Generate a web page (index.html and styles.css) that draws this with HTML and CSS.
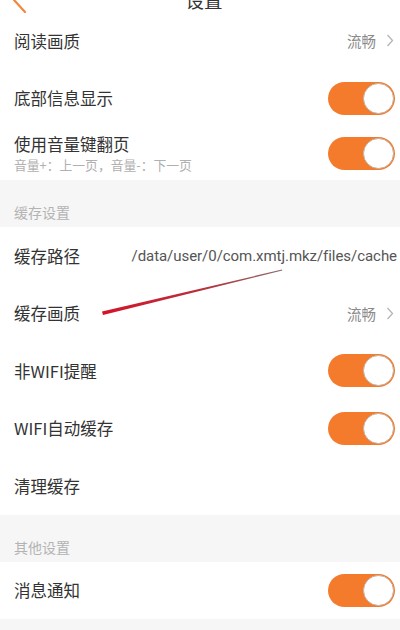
FILE: index.html
```html
<!DOCTYPE html>
<html lang="zh">
<head>
<meta charset="utf-8">
<link rel="stylesheet" href="styles.css">
</head>
<body>
<div class="page">
  <header class="topbar">
    <svg class="back" width="16" height="26" viewBox="0 0 16 26"><path d="M13 1 L2 13 L13 25" fill="none" stroke="#f0883e" stroke-width="2.2" stroke-linecap="round" stroke-linejoin="round"/></svg>
    <div class="title">设置</div>
  </header>

  <div class="row">
    <span class="label">阅读画质</span>
    <span class="value">流畅<svg class="chev" width="8" height="13" viewBox="0 0 8 13"><path d="M1.5 1 L6.5 6.5 L1.5 12" fill="none" stroke="#b5b5b5" stroke-width="1.3"/></svg></span>
  </div>
  <div class="row">
    <span class="label">底部信息显示</span>
    <span class="switch"><span class="knob"></span></span>
  </div>
  <div class="row row-tall">
    <div class="stack">
      <span class="label">使用音量键翻页</span>
      <span class="sub">音量+：上一页，音量-：下一页</span>
    </div>
    <span class="switch"><span class="knob"></span></span>
  </div>

  <div class="section">缓存设置</div>

  <div class="row">
    <span class="label">缓存路径</span>
    <span class="path">/data/user/0/com.xmtj.mkz/files/cache</span>
  </div>
  <div class="row">
    <span class="label">缓存画质</span>
    <span class="value">流畅<svg class="chev" width="8" height="13" viewBox="0 0 8 13"><path d="M1.5 1 L6.5 6.5 L1.5 12" fill="none" stroke="#b5b5b5" stroke-width="1.3"/></svg></span>
  </div>
  <div class="row">
    <span class="label">非WIFI提醒</span>
    <span class="switch"><span class="knob"></span></span>
  </div>
  <div class="row">
    <span class="label">WIFI自动缓存</span>
    <span class="switch"><span class="knob"></span></span>
  </div>
  <div class="row">
    <span class="label">清理缓存</span>
  </div>

  <div class="section">其他设置</div>

  <div class="row">
    <span class="label">消息通知</span>
    <span class="switch"><span class="knob"></span></span>
  </div>
  <div class="footer-gap"></div>

  <svg class="annot" width="400" height="630" viewBox="0 0 400 630">
    <defs>
      <linearGradient id="g" x1="102" y1="313" x2="282" y2="270" gradientUnits="userSpaceOnUse">
        <stop offset="0" stop-color="#d4142a"/>
        <stop offset="0.55" stop-color="#b8303a"/>
        <stop offset="1" stop-color="#8a6a6a"/>
      </linearGradient>
    </defs>
    <polygon points="102,311.5 282,269.6 282.3,270.6 103,315" fill="url(#g)"/>
  </svg>
</div>
</body>
</html>
```

FILE: styles.css
```css
html, body {
  margin: 0;
  padding: 0;
  background: #ffffff;
}
.page {
  position: relative;
  width: 400px;
  height: 630px;
  overflow: hidden;
  font-family: "Noto Sans CJK SC", "Noto Sans", sans-serif;
  color: #333333;
}
.topbar {
  position: relative;
  height: 24px;
  margin-top: -12px;
  display: flex;
  align-items: center;
  justify-content: center;
}
.back {
  position: absolute;
  left: 12px;
  top: -1px;
}
.title {
  font-size: 18.5px;
  line-height: 24px;
  color: #333;
  margin-left: 8px;
}
.row {
  height: 57.5px;
  display: flex;
  align-items: center;
  justify-content: space-between;
  padding: 0 4px 0 14px;
  box-sizing: border-box;
}
.row-tall {
  height: 53px;
  align-items: center;
}
.stack {
  display: flex;
  flex-direction: column;
  margin-top: -2px;
}
.label {
  font-size: 16.5px;
  line-height: 22px;
  color: #333;
}
.sub {
  font-size: 12.8px;
  line-height: 16px;
  color: #b0b0b0;
  margin-top: 2px;
}
.value {
  display: flex;
  align-items: center;
  font-size: 14.5px;
  color: #8a8a8a;
  margin-right: 2px;
}
.chev {
  margin-left: 10px;
}
.path {
  font-family: Roboto, "Noto Sans", sans-serif;
  font-size: 15px;
  color: #555;
  white-space: nowrap;
  margin-right: -1px;
  letter-spacing: -0.05px;
}
.switch {
  position: relative;
  width: 67px;
  height: 33px;
  border-radius: 17px;
  background: #f47a2c;
  box-sizing: border-box;
  margin-right: 1px;
}
.knob {
  position: absolute;
  right: 1px;
  top: 1px;
  width: 31px;
  height: 31px;
  border-radius: 50%;
  background: #ffffff;
  border: 1px solid #c4b2a2;
  box-sizing: border-box;
}
.section {
  height: 47px;
  background: #f6f6f6;
  box-sizing: border-box;
  padding: 22px 0 0 14px;
  font-size: 14px;
  line-height: 20px;
  color: #b3b3b3;
}
.footer-gap {
  height: 20px;
  background: #f6f6f6;
}
.annot {
  position: absolute;
  left: 0;
  top: 0;
  pointer-events: none;
}
```
